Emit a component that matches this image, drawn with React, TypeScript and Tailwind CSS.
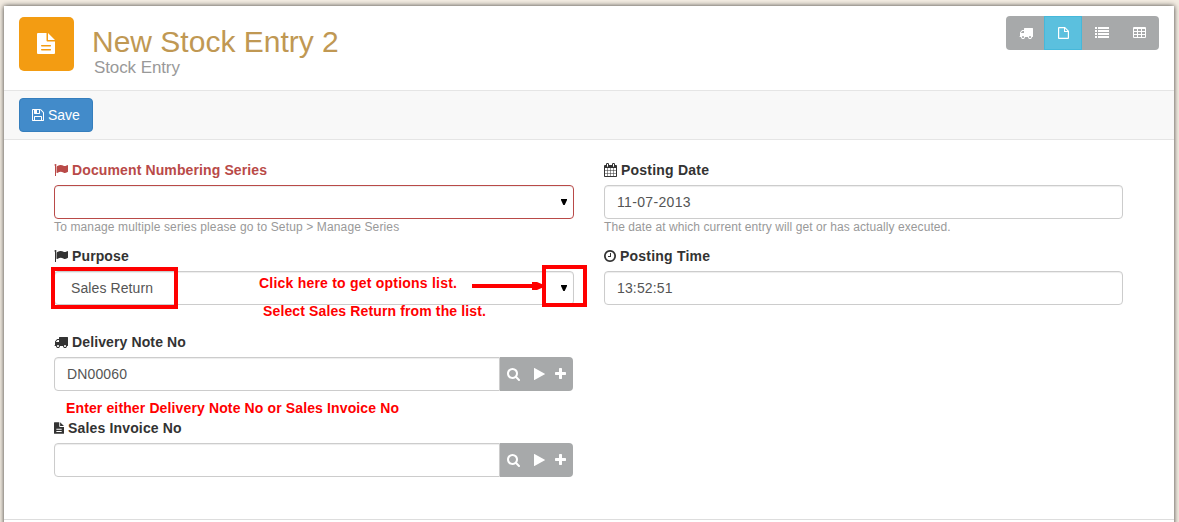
import React from "react";

type Glyph = { box: string; size: string; d: string };

const glyphs: Record<string, Glyph> = {
  truck: {
    box: "0 0 1792 1792",
    size: "w-[14px] h-[14px]",
    d: "M640 1408q0-52-38-90t-90-38-90 38-38 90 38 90 90 38 90-38 38-90zm-384-512h384v-256h-158q-13 0-22 9l-195 195q-9 9-9 22v30zm1280 512q0-52-38-90t-90-38-90 38-38 90 38 90 90 38 90-38 38-90zm256-1088v1024q0 15-4 26.5t-13.5 18.5-16.5 11.5-23.5 6-22.5 2-25.5 0-22.5-.5q0 106-75 181t-181 75-181-75-75-181h-384q0 106-75 181t-181 75-181-75-75-181h-64q-3 0-22.5.5t-25.5 0-22.5-2-23.5-6-16.5-11.5-13.5-18.5-4-26.5q0-26 19-45t45-19v-320q0-8-.5-35t0-38 2.5-34.5 6.5-37 14-30.5 22.5-30l198-198q19-19 50.5-32t58.5-13h160v-192q0-26 19-45t45-19h1024q26 0 45 19t19 45z",
  },
  save: {
    box: "128 0 1536 1792",
    size: "w-[12px] h-[14px]",
    d: "M512 1536h768v-384h-768v384zm896 0h128v-896q0-14-10-38.5t-20-34.5l-281-281q-10-10-34-20t-39-10v416q0 40-28 68t-68 28h-576q-40 0-68-28t-28-68v-416h-128v1280h128v-416q0-40 28-68t68-28h832q40 0 68 28t28 68v416zm-384-928v-320q0-13-9.5-22.5t-22.5-9.5h-192q-13 0-22.5 9.5t-9.5 22.5v320q0 13 9.5 22.5t22.5 9.5h192q13 0 22.5-9.5t9.5-22.5zm640 32v928q0 40-28 68t-68 28h-1344q-40 0-68-28t-28-68v-1344q0-40 28-68t68-28h928q40 0 88 20t76 48l280 280q28 28 48 76t20 88z",
  },
  file: {
    box: "0 0 11 12",
    size: "w-[11px] h-[12px]",
    d: "M1 0H7L11 4V11Q11 12 10 12H1Q0 12 0 11V1Q0 0 1 0ZM1.2 1.2V10.8H9.8V5H6V1.2ZM7.1 1.6V3.9H9.4Z",
  },
  fileText: {
    box: "0 0 18 21",
    size: "w-[10px] h-[12px]",
    d: "M1 0H9.5V7.5Q9.5 8.5 10.5 8.5H18V20Q18 21 17 21H1Q0 21 0 20V1Q0 0 1 0ZM11 0L18 7H11ZM4.5 12Q4 12 4 12.5T4.5 13.5H13.5Q14 13.5 14 12.7T13.5 12ZM4.5 16Q4 16 4 16.5T4.5 17.5H13.5Q14 17.5 14 16.7T13.5 16Z",
  },
  search: {
    box: "64 0 1664 1792",
    size: "w-[13px] h-[14px]",
    d: "M1216 832q0-185-131.5-316.5t-316.5-131.5-316.5 131.5-131.5 316.5 131.5 316.5 316.5 131.5 316.5-131.5 131.5-316.5zm512 832q0 52-38 90t-90 38q-54 0-90-38l-343-342q-179 124-399 124-143 0-273.5-55.5t-225-150-150-225-55.5-273.5 55.5-273.5 150-225 225-150 273.5-55.5 273.5 55.5 225 150 150 225 55.5 273.5q0 220-124 399l343 343q37 37 37 90z",
  },
  play: {
    box: "192 0 1408 1792",
    size: "w-[11px] h-[14px]",
    d: "M1576 927l-1328 738q-23 13-39.5 3t-16.5-36v-1472q0-26 16.5-36t39.5 3l1328 738q23 13 23 31t-23 31z",
  },
  plus: {
    box: "192 0 1408 1792",
    size: "w-[11px] h-[14px]",
    d: "M1600 736v192q0 40-28 68t-68 28h-416v416q0 40-28 68t-68 28h-192q-40 0-68-28t-28-68v-416h-416q-40 0-68-28t-28-68v-192q0-40 28-68t68-28h416v-416q0-40 28-68t68-28h192q40 0 68 28t28 68v416h416q40 0 68 28t28 68z",
  },
  calendar: {
    box: "64 0 1664 1792",
    size: "w-[13px] h-[14px]",
    d: "M192 1664h288v-288h-288v288zm352 0h320v-288h-320v288zm-352-352h288v-320h-288v320zm352 0h320v-320h-320v320zm-352-384h288v-288h-288v288zm736 736h320v-288h-320v288zm-384-736h320v-288h-320v288zm768 736h288v-288h-288v288zm-384-352h320v-320h-320v320zm-352-864v-288q0-13-9.5-22.5t-22.5-9.5h-64q-13 0-22.5 9.5t-9.5 22.5v288q0 13 9.5 22.5t22.5 9.5h64q13 0 22.5-9.5t9.5-22.5zm736 864h288v-320h-288v320zm-384-384h320v-288h-320v288zm384 0h288v-288h-288v288zm32-480v-288q0-13-9.5-22.5t-22.5-9.5h-64q-13 0-22.5 9.5t-9.5 22.5v288q0 13 9.5 22.5t22.5 9.5h64q13 0 22.5-9.5t9.5-22.5zm384-64v1280q0 52-38 90t-90 38h-1408q-52 0-90-38t-38-90v-1280q0-52 38-90t90-38h128v-96q0-66 47-113t113-47h64q66 0 113 47t47 113v96h384v-96q0-66 47-113t113-47h64q66 0 113 47t47 113v96h128q52 0 90 38t38 90z",
  },
  clock: {
    box: "128 128 1536 1536",
    size: "w-[12px] h-[12px]",
    d: "M1024 544v448q0 14-9 23t-23 9h-320q-14 0-23-9t-9-23v-64q0-14 9-23t23-9h224v-352q0-14 9-23t23-9h64q14 0 23 9t9 23zm416 352q0-148-73-273t-198-198-273-73-273 73-198 198-73 273 73 273 198 198 273 73 273-73 198-198 73-273zm224 0q0 209-103 385.5t-279.5 279.5-385.5 103-385.5-103-279.5-279.5-103-385.5 103-385.5 279.5-279.5 385.5-103 385.5 103 279.5 279.5 103 385.5z",
  },
  flag: {
    box: "0 0 1792 1792",
    size: "w-[14px] h-[14px]",
    d: "M320 256q0 72-64 110v1266q0 13-9.5 22.5t-22.5 9.5h-64q-13 0-22.5-9.5t-9.5-22.5v-1266q-64-38-64-110 0-53 37.5-90.5t90.5-37.5 90.5 37.5 37.5 90.5zm1472 64v763q0 25-12.5 38.5t-39.5 27.5q-215 116-369 116-61 0-123.5-22t-108.5-48-115.5-48-142.5-22q-192 0-464 146-17 9-33 9-26 0-45-19t-19-45v-742q0-32 31-55 21-14 79-43 236-120 421-120 107 0 200 29t219 88q38 19 88 19 54 0 117.5-21t110-47 88-47 54.5-21q26 0 45 19t19 45z",
  },
  list: {
    box: "0 0 14 14",
    size: "w-[14px] h-[14px]",
    d: "M0 1h2v2H0zM3 1h11v2H3zM0 4h2v2H0zM3 4h11v2H3zM0 7h2v2H0zM3 7h11v2H3zM0 10h2v2H0zM3 10h11v2H3z",
  },
  table: {
    box: "0 0 13 14",
    size: "w-[13px] h-[14px]",
    d: "M1 1h11q1 0 1 1v9q0 1-1 1H1q-1 0-1-1V2q0-1 1-1zM1 3v2h3V3zM5 3v2h3V3zM9 3v2h3V3zM1 6v2h3V6zM5 6v2h3V6zM9 6v2h3V6zM1 9v2h3V9zM5 9v2h3V9zM9 9v2h3V9z",
  },
};

const cutOut = ["table", "file", "fileText"];

function Icon({ name, className }: { name: string; className?: string }) {
  const g = glyphs[name];
  return (
    <svg viewBox={g.box} className={`shrink-0 ${className ?? g.size}`} fill="currentColor" fillRule={cutOut.includes(name) ? "evenodd" : "nonzero"}>
      <path d={g.d} />
    </svg>
  );
}

function Label({ icon, text, error, tracking = "tracking-[0.12px]" }: { icon: string; text: string; error?: boolean; tracking?: string }) {
  return (
    <div className={`mb-[5px] flex h-5 items-center gap-1 font-bold ${error ? "text-[#b94a48]" : "text-[#333333]"}`}>
      <Icon name={icon} />
      <span className={tracking}>{text}</span>
    </div>
  );
}

const control = "flex h-[34px] items-center border bg-white px-3 text-[#555555] shadow-[inset_0_1px_1px_rgba(0,0,0,0.075)]";

function Select({ value, error }: { value: string; error?: boolean }) {
  return (
    <div className={`${control} justify-between rounded ${error ? "border-[#b94a48]" : "border-[#cccccc]"}`}>
      <span className="pl-1 tracking-[0.1px]">{value}</span>
      <svg viewBox="0 0 6 6" className="-mr-[6px] h-[6px] w-[6px] fill-black">
        <path d="M0 0h6v1L3.7 6H2.3L0 1z" />
      </svg>
    </div>
  );
}

function LinkInput({ value }: { value: string }) {
  return (
    <div className="flex w-[519px]">
      <div className={`${control} w-[446px] rounded-l border-[#cccccc] tracking-[0.13px]`}>{value}</div>
      <div className="flex h-[34px] w-[73px] items-center rounded-r bg-[#a7a9aa] pl-[7px] text-white">
        <Icon name="search" />
        <Icon name="play" className="ml-[14px] h-[14px] w-[11px]" />
        <Icon name="plus" className="ml-[10px] h-[14px] w-[11px]" />
      </div>
    </div>
  );
}

function Note({ className, children }: { className: string; children: React.ReactNode }) {
  return <div className={`absolute whitespace-nowrap font-bold leading-5 text-[#ff0000] ${className}`}>{children}</div>;
}

export default function App() {
  return (
    <div className="relative h-[522px] overflow-hidden bg-[#f3ece2] pl-1 pr-[5px] pt-[6px] font-['Liberation_Sans',Arial,sans-serif] text-[14px] leading-5">
      <main className="h-[530px] bg-white shadow-[0_0_5px_rgba(0,0,0,0.75)]">
        <header className="flex h-[85px] items-start border-b border-[#e5e5e5] pl-[15px] pr-[15px]">
          <div className="mt-[11px] flex h-[54px] w-[55px] items-start rounded-[5px] bg-[#f39c12] pl-[18px] pt-4 text-white">
            <Icon name="fileText" className="h-[21px] w-[18px]" />
          </div>
          <div className="ml-[18px] mt-[19px]">
            <h1 className="text-[30px] leading-[33px] text-[#c09853]">New Stock Entry 2</h1>
            <div className="pl-[2px] text-[17px] leading-5 tracking-[-0.1px] text-[#999999]">Stock Entry</div>
          </div>
          <nav className="ml-auto mt-[10px] flex h-[34px] w-[153px] overflow-hidden rounded bg-[#a7a9aa] text-white">
            <div className="flex w-[38px] items-center justify-center pl-[2px]"><Icon name="truck" /></div>
            <div className="flex w-[38px] items-center border border-[#46b8da] bg-[#5bc0de] pl-[13px]"><Icon name="file" /></div>
            <div className="flex w-[39px] items-center pl-[13px]"><Icon name="list" /></div>
            <div className="flex w-[38px] items-center pl-3"><Icon name="table" /></div>
          </nav>
        </header>
        <div className="flex h-[49px] items-center border-b border-[#e5e5e5] bg-[#f8f8f8] pl-[15px]">
          <button className="flex h-[34px] w-[74px] items-center gap-1 rounded border border-[#357ebd] bg-[#428bca] pl-3 text-white">
            <Icon name="save" />
            <span>Save</span>
          </button>
        </div>
        <section className="flex h-[380px] gap-[30px] border-b border-[#dddddd] pl-[50px] pt-5">
          <div className="w-[520px]">
            <div className="h-[86px]">
              <Label icon="flag" text="Document Numbering Series" error />
              <Select value="" error />
              <p className="text-[12px] leading-[17px] tracking-[0.135px] text-[#999999]">To manage multiple series please go to Setup &gt; Manage Series</p>
            </div>
            <div className="h-[86px]">
              <Label icon="flag" text="Purpose" />
              <Select value="Sales Return" />
            </div>
            <div className="h-[86px]">
              <Label icon="truck" text="Delivery Note No" />
              <LinkInput value="DN00060" />
            </div>
            <div>
              <Label icon="fileText" text="Sales Invoice No" tracking="tracking-[0.16px]" />
              <LinkInput value="" />
            </div>
          </div>
          <div className="w-[519px]">
            <div className="h-[86px]">
              <Label icon="calendar" text="Posting Date" tracking="tracking-[0.22px]" />
              <div className={`${control} rounded border-[#cccccc] tracking-[0.33px]`}>11-07-2013</div>
              <p className="text-[12px] leading-[17px] tracking-[0.08px] text-[#999999]">The date at which current entry will get or has actually executed.</p>
            </div>
            <div>
              <Label icon="clock" text="Posting Time" tracking="tracking-[0.22px]" />
              <div className={`${control} rounded border-[#cccccc] tracking-[0.15px]`}>13:52:51</div>
            </div>
          </div>
        </section>
      </main>
      <div className="absolute left-[51px] top-[267px] h-[42px] w-[127px] border-4 border-[#ff0000]" />
      <div className="absolute left-[542px] top-[265px] h-[42px] w-[45px] border-4 border-[#ff0000]" />
      <svg className="absolute left-[472px] top-[281px] h-[10px] w-[72px] fill-[#ff0000]" viewBox="0 0 72 10">
        <path d="M0 3h60V1h5l7 3v2l-7 3h-5V7H0z" />
      </svg>
      <Note className="left-[259px] top-[273px] tracking-[0.22px]">Click here to get options list.</Note>
      <Note className="left-[263px] top-[301px] tracking-[0.13px]">Select Sales Return from the list.</Note>
      <Note className="left-[66px] top-[398px] tracking-[0.13px]">Enter either Delivery Note No or Sales Invoice No</Note>
    </div>
  );
}
